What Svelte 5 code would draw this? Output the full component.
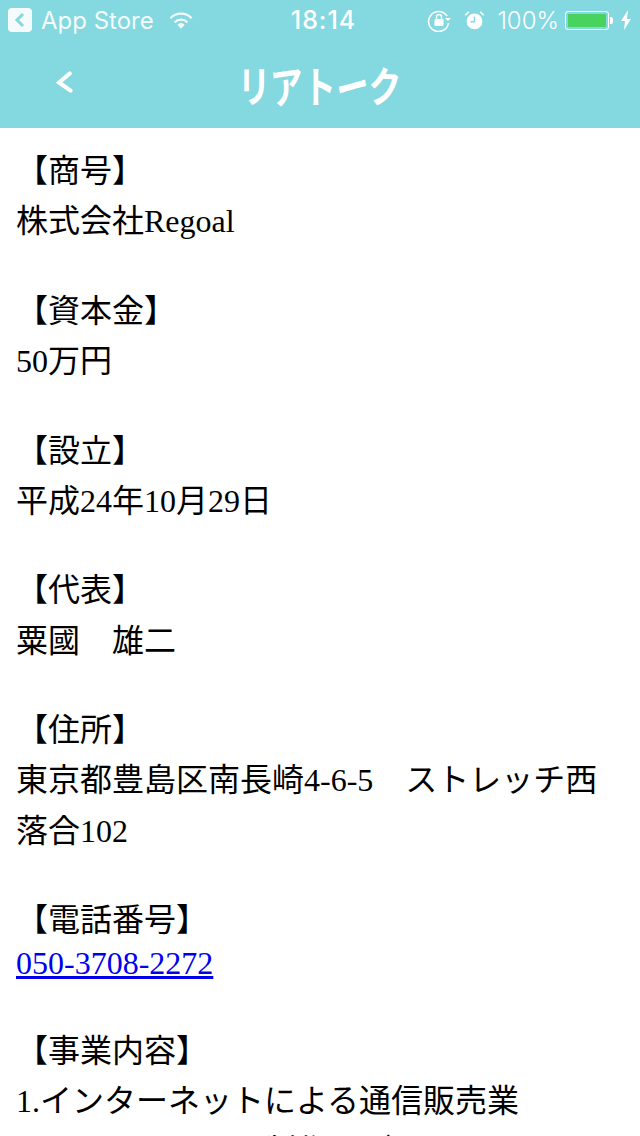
<script>
	const sections = [
		{ label: '【商号】', lines: ['株式会社Regoal'] },
		{ label: '【資本金】', lines: ['50万円'] },
		{ label: '【設立】', lines: ['平成24年10月29日'] },
		{ label: '【代表】', lines: ['粟國　雄二'] },
		{ label: '【住所】', lines: ['東京都豊島区南長崎4-6-5　ストレッチ西', '落合102'] }
	];
	const title = ['リ', 'ア', 'ト', 'ー', 'ク'];
</script>

<div class="page">
	<header class="topbar">
		<div class="status">
			<div class="status__left">
				<svg class="appback" viewBox="0 0 24 24" width="24" height="24" aria-hidden="true">
					<rect width="24" height="24" rx="4" fill="#fff" />
					<path d="M15 6l-6 6 6 6" fill="none" stroke="#84d8e0" stroke-width="3" />
				</svg>
				<span>App Store</span>
				<svg class="wifi" viewBox="0 0 26 20" width="24" height="19" aria-hidden="true">
					<g fill="none" stroke="#fff" stroke-width="2.4">
						<path d="M1.500 7.500a16 16 0 0 1 23 0" />
						<path d="M6 12a10 10 0 0 1 14 0" />
					</g>
					<path d="M13 19l-4-4.400a6 6 0 0 1 8 0z" fill="#fff" />
				</svg>
			</div>
			<span class="status__time">18:14</span>
			<div class="status__right">
				<svg viewBox="0 0 24 24" width="24" height="24" aria-hidden="true">
					<path d="M20 8a10 10 0 1 0 1.500 7" fill="none" stroke="#fff" stroke-width="1.600" />
					<path d="M18 10h6l-3 3z" fill="#fff" />
					<rect x="7.500" y="11" width="9" height="7" rx="1" fill="#fff" />
					<path d="M9.500 11V9a2.500 2.500 0 0 1 5 0v2" fill="none" stroke="#fff" stroke-width="1.400" />
				</svg>
				<svg class="alarm" viewBox="0 0 24 24" width="21" height="21" aria-hidden="true">
					<circle cx="12" cy="13" r="9" fill="#fff" />
					<path d="M12 7.500V13.500H7.500" fill="none" stroke="#84d8e0" stroke-width="1.600" />
					<path d="M1.500 6l4-4M22.500 6l-4-4" stroke="#fff" stroke-width="2" />
				</svg>
				<span class="pct">100%</span>
				<div class="battery"><div class="battery__fill"></div></div>
				<div class="battery__tip"></div>
				<svg class="bolt" viewBox="0 0 12 20" width="12" height="20" aria-hidden="true">
					<path d="M8 0L1 11h4l-1 9 7-11H7z" fill="#fff" />
				</svg>
			</div>
		</div>
		<div class="nav">
			<svg class="nav__back" viewBox="0 0 22 28" width="18" height="23" aria-hidden="true">
				<path d="M18 3L5 14l14 10" fill="none" stroke="#fff" stroke-width="5" stroke-linecap="round" />
			</svg>
			<h1 class="nav__title">
				{#each title as ch}<span>{ch}</span>{/each}
			</h1>
		</div>
	</header>

	<main class="content">
		{#each sections as s}
			<div class="row">{s.label}</div>
			{#each s.lines as line}
				<div class="row">{line}</div>
			{/each}
			<div class="gap"></div>
		{/each}
		<div class="row">【電話番号】</div>
		<div class="row row--link"><a href="tel:050-3708-2272">050-3708-2272</a></div>
		<div class="gap"></div>
		<div class="row">【事業内容】</div>
		<div class="row">1.インターネットによる通信販売業</div>
		<div class="row">2.ソフトウェアの制作・デザイン</div>
	</main>
</div>

<style>
	:global(body) {
		margin: 0;
		background: #fff;
	}

	.page {
		width: 640px;
		height: 1136px;
		overflow: hidden;
		background: #fff;
	}

	.topbar {
		height: 128px;
		background: #84d8e0;
		color: #fff;
	}

	.status {
		height: 40px;
		display: grid;
		grid-template-columns: 1fr auto 1fr;
		align-items: center;
		padding: 0 8px;
		font-family: Inter, 'Liberation Sans', sans-serif;
		font-size: 24px;
		color: #fff;
	}

	.status__left {
		display: flex;
		align-items: center;
		gap: 9px;
		opacity: 0.92;
	}

	.wifi {
		margin-left: 6px;
	}

	.status__time {
		margin-left: 7px;
		font-weight: 500;
		letter-spacing: 1px;
		font-size: 25px;
	}

	.status__right {
		display: flex;
		align-items: center;
		justify-content: flex-end;
		margin-right: -8px;
		padding-right: 8px;
	}

	.alarm {
		margin-left: 13px;
	}

	.pct {
		margin-left: 12px;
		font-weight: 300;
	}

	.battery {
		box-sizing: border-box;
		width: 44px;
		height: 19px;
		margin-left: 6px;
		padding: 2px;
		border: 1px solid #fff;
		border-radius: 3px;
	}

	.battery__fill {
		height: 100%;
		border-radius: 1px;
		background: #48d35e;
	}

	.battery__tip {
		width: 3px;
		height: 7px;
		margin-left: 1px;
		border-radius: 0 2px 2px 0;
		background: #fff;
	}

	.bolt {
		margin-left: 7px;
	}

	.nav {
		position: relative;
		height: 88px;
		display: flex;
		align-items: center;
		justify-content: center;
	}

	.nav__back {
		position: absolute;
		left: 55px;
		top: 31px;
	}

	.nav__title {
		display: flex;
		margin: 0 0 0 -2px;
		font-family: 'Noto Sans CJK JP', sans-serif;
		font-size: 43px;
		font-weight: 700;
		line-height: 1;
		transform: scaleX(0.76);
	}

	.nav__title span:nth-child(2) {
		transform: rotate(-6deg);
	}

	.nav__title span:nth-child(4) {
		transform: rotate(-12deg);
	}

	.nav__title span:nth-child(5) {
		transform: rotate(3deg);
	}

	.content {
		padding: 18px 16px 0;
		font-family: 'Liberation Serif', 'Noto Sans CJK JP', serif;
		font-size: 32px;
		color: #000;
	}

	.row {
		height: 50.25px;
		line-height: 50.25px;
		white-space: nowrap;
	}

	.row--link {
		height: 36px;
		line-height: 36px;
		margin-bottom: 5px;
	}

	.row--link a {
		color: #0000ee;
	}

	.gap {
		height: 39.25px;
	}
</style>
